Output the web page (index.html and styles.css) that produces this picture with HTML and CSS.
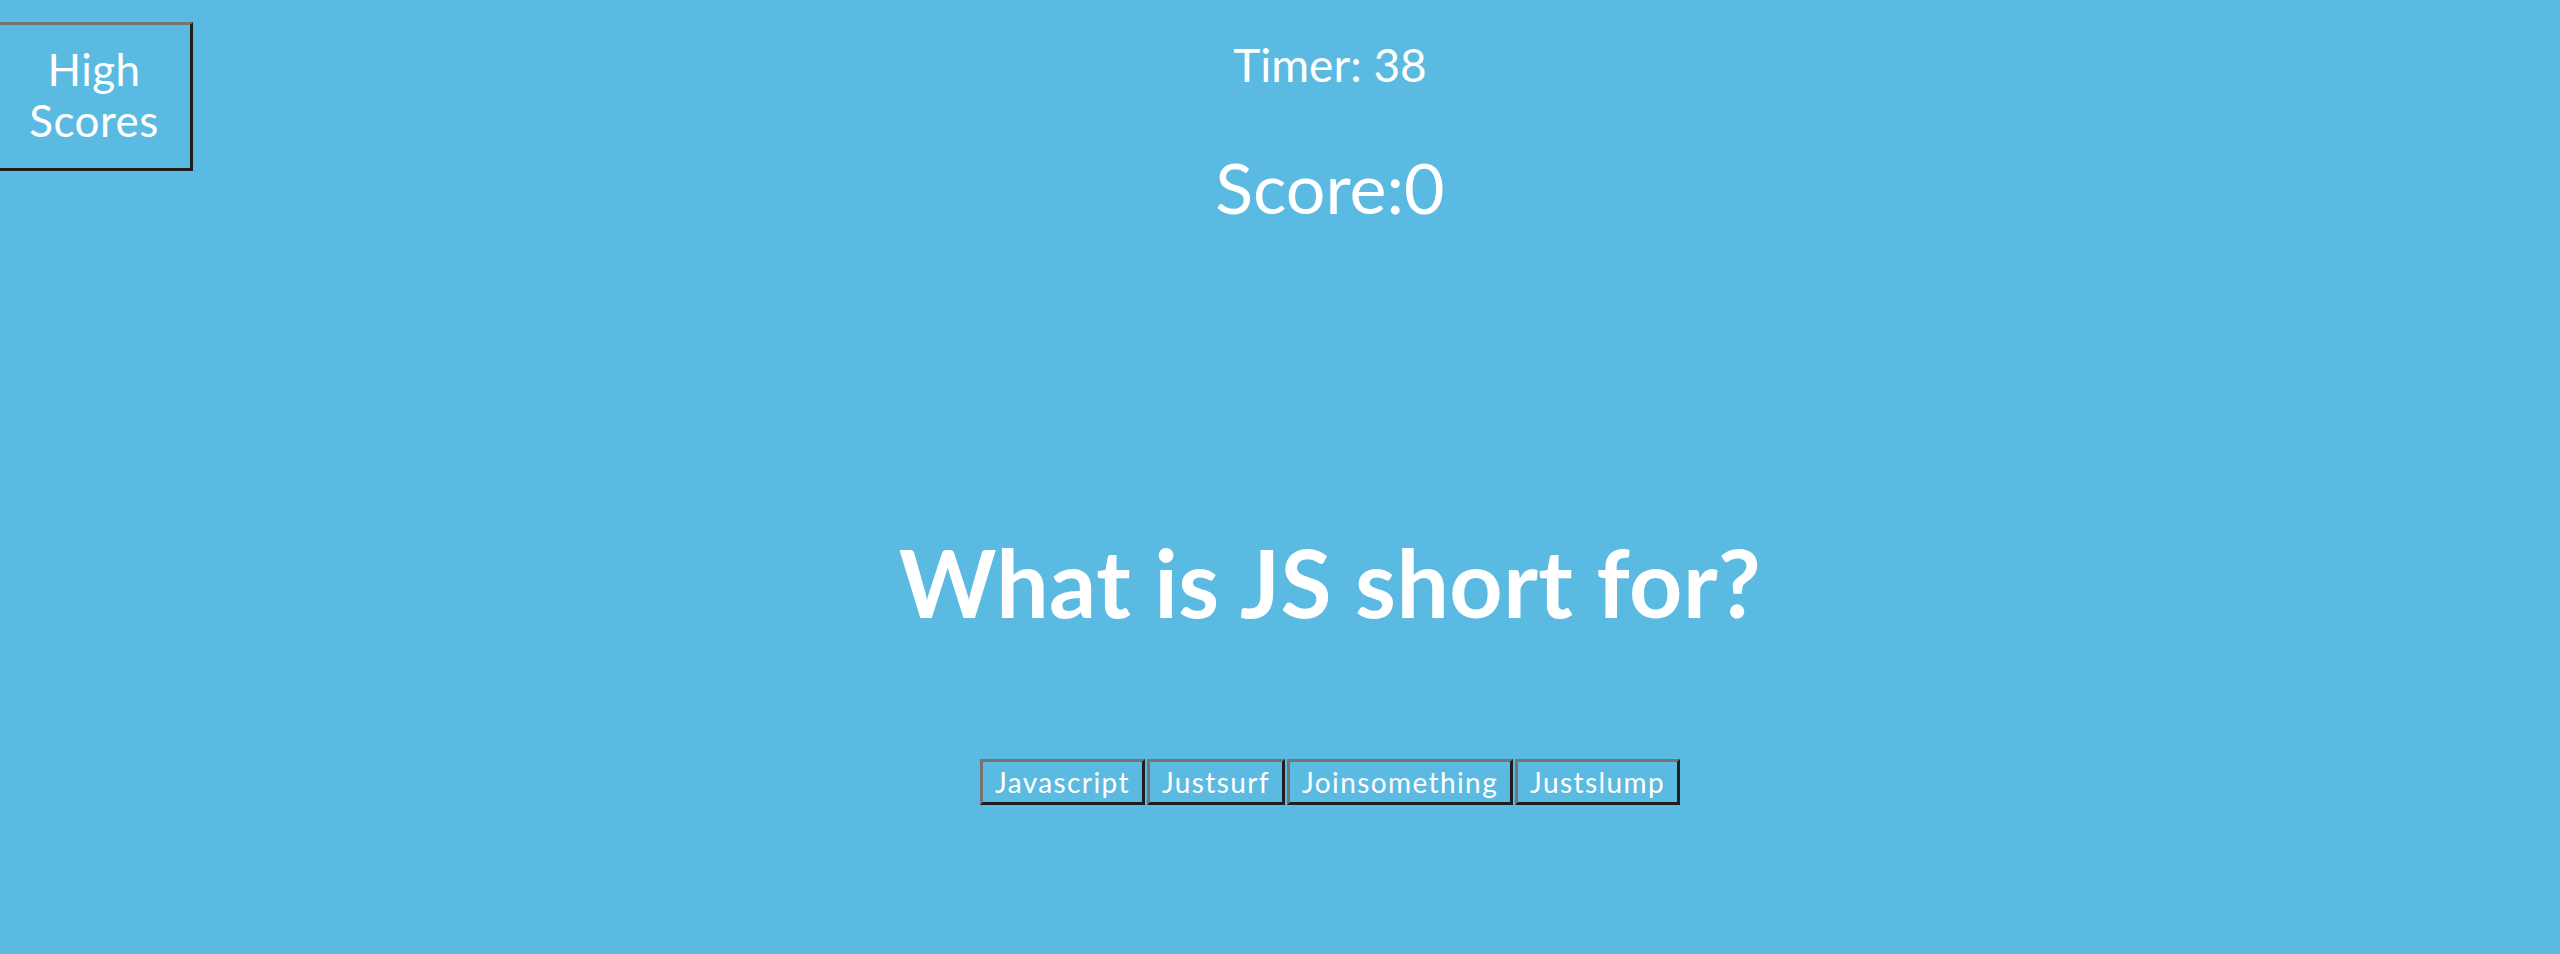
FILE: index.html
```html
<!DOCTYPE html>
<html lang="en">
<head>
<meta charset="utf-8">
<title>Code Quiz</title>
<link rel="stylesheet" href="styles.css">
</head>
<body>
<div class="page">
  <button class="hs-btn" type="button">High Scores</button>
  <main class="main">
    <p class="timer">Timer: 38</p>
    <h2 class="score">Score:0</h2>
    <h1 class="question">What is JS short for?</h1>
    <div class="answers">
      <button class="answer" type="button">Javascript</button>
      <button class="answer" type="button">Justsurf</button>
      <button class="answer" type="button">Joinsomething</button>
      <button class="answer" type="button">Justslump</button>
    </div>
  </main>
</div>
</body>
</html>
```
FILE: styles.css
```css
html, body {
  margin: 0;
  padding: 0;
}
body {
  background: #5bbae2;
  color: #ffffff;
  font-family: Lato, "Open Sans", sans-serif;
  min-height: 100vh;
}
.page {
  display: grid;
  grid-template-columns: 200px 1fr 100px;
  align-items: start;
}
.hs-btn {
  box-sizing: border-box;
  width: 198px;
  margin: 22px 0 0 -5px;
  padding: 19px 0 22px;
  font-family: inherit;
  font-size: 44px;
  line-height: 51px;
  letter-spacing: 0.01em;
  color: #ffffff;
  background: transparent;
  border-width: 3px;
  border-style: solid;
  border-color: #747474 #1e1e1e #1e1e1e #747474;
}
.main {
  display: flex;
  flex-direction: column;
  align-items: center;
}
.timer {
  margin: 37px 0 0;
  font-size: 46px;
  line-height: 55px;
  letter-spacing: 0;
}
.score {
  margin: 53px 0 0;
  font-size: 70px;
  line-height: 84px;
  font-weight: 400;
  letter-spacing: 0;
}
.question {
  margin: 297px 0 0;
  font-size: 93px;
  line-height: 112px;
  font-weight: 700;
  letter-spacing: 0.005em;
}
.answers {
  display: flex;
  gap: 2px;
  margin-top: 121px;
}
.answer {
  font-family: inherit;
  font-size: 28px;
  line-height: 34px;
  letter-spacing: 0.05em;
  padding: 3px 12px;
  color: #ffffff;
  background: transparent;
  border-width: 3px;
  border-style: solid;
  border-color: #747474 #1e1e1e #1e1e1e #747474;
}
```
